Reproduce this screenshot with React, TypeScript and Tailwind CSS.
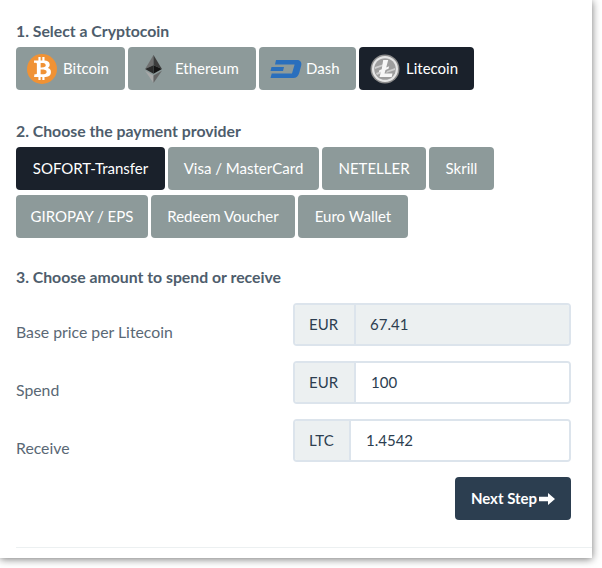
import { FaBtc } from "react-icons/fa";
import { ReactNode } from "react";

const lato = "font-['Lato','Liberation_Sans',sans-serif]";

function Coin({
  label,
  icon,
  active,
  className,
}: {
  label: string;
  icon?: ReactNode;
  active?: boolean;
  className: string;
}) {
  return (
    <button
      className={`flex h-[43px] items-center rounded-[4px] text-[15px] text-white ${
        active ? "bg-[#1a212b]" : "bg-[#8d9a9a]"
      } ${className}`}
    >
      {icon}
      <span>{label}</span>
    </button>
  );
}

function BitcoinIcon() {
  return (
    <span className="mr-[6px] flex h-[30px] w-[30px] items-center justify-center rounded-full bg-[#f09235]">
      <FaBtc className="h-[23px] w-[23px] text-white" />
    </span>
  );
}

function EthereumIcon() {
  return (
    <svg viewBox="0 0 20 30" className="mr-[12px] h-[28px] w-[19px]">
      <polygon points="10,0 10,11 1,15" fill="#6f6f6f" />
      <polygon points="10,0 10,11 19,15" fill="#3c3c3c" />
      <polygon points="10,11 1,15 10,20" fill="#2a2a2a" />
      <polygon points="10,11 19,15 10,20" fill="#141414" />
      <polygon points="1,17 10,30 10,22" fill="#a8a8a8" />
      <polygon points="19,17 10,30 10,22" fill="#666666" />
    </svg>
  );
}

function DashIcon() {
  return (
    <svg viewBox="0 0 32 18" className="mr-[4px] h-[18px] w-[32px]">
      <path
        d="M6 0h21c3.500 0 5 2.500 4.200 5.500l-2 7.500c-.8 3-3 5-6 5H.5l1.200-4.500H22l2.600-9H5z"
        fill="#2a6fbd"
      />
      <path d="M1.500 7H14l-1 4H.5z" fill="#2a6fbd" />
    </svg>
  );
}

function LitecoinIcon() {
  return (
    <svg viewBox="0 0 30 30" className="mr-[6px] h-[30px] w-[30px]">
      <circle cx="15" cy="15" r="14.500" fill="#8c8c8c" />
      <circle cx="15" cy="15" r="13" fill="#e6e6e6" />
      <circle cx="15" cy="15" r="10.800" fill="#9e9e9e" />
      <path d="M5 13l9-3-1 2-8 3zM17 17l8-3v2l-9 3zM6 19l6-2-.5 2-4.500 2z" fill="#cfcfcf" />
      <path
        d="M13.200 6h5l-2 7.500 3-1.200-.7 2.500-3 1.200-1 3.500h8l-.8 3.500H9.500l1.500-5.300-2.300.9.6-2.400 2.400-.9z"
        fill="#f7f7f7"
      />
    </svg>
  );
}

function PriceRow({
  label,
  unit,
  value,
  unitWidth,
  valuePad,
  readOnly,
}: {
  label: string;
  unit: string;
  value: string;
  unitWidth: string;
  valuePad: string;
  readOnly?: boolean;
}) {
  return (
    <div className="flex h-[43px]">
      <div className="w-[277px] pt-[18px] text-[15.8px] leading-[22px] text-[#5a6875]">{label}</div>
      <div className="flex w-[278px] overflow-hidden rounded-[4px] border-2 border-[#dce4ec] text-[15px] text-[#2c3e50]">
        <div className={`flex items-center border-r-2 border-[#dce4ec] bg-[#ecf0f1] pl-[14px] ${unitWidth}`}>{unit}</div>
        <div className={`flex flex-1 items-center ${valuePad} ${readOnly ? "bg-[#ecf0f1]" : "bg-white"}`}>{value}</div>
      </div>
    </div>
  );
}

export default function App() {
  return (
    <div className={`h-[568px] w-[602px] bg-white ${lato}`}>
      <div className="h-[558px] w-[592px] bg-white pl-4 pt-5 shadow-[0_1px_8px_rgba(0,0,0,0.55)]">
        <h2 className="mb-[5px] text-[15.8px] font-bold leading-[22px] text-[#4e5d6c]">1. Select a Cryptocoin</h2>
        <div className="flex gap-[3px]">
          <Coin label="Bitcoin" icon={<BitcoinIcon />} className="w-[109px] pl-[11px]" />
          <Coin label="Ethereum" icon={<EthereumIcon />} className="w-[128px] pl-4" />
          <Coin label="Dash" icon={<DashIcon />} className="w-[97px] pl-[11px]" />
          <Coin label="Litecoin" icon={<LitecoinIcon />} active className="w-[115px] pl-[11px]" />
        </div>

        <h2 className="mb-[5px] mt-[30px] text-[15.8px] font-bold leading-[22px] text-[#4e5d6c]">2. Choose the payment provider</h2>
        <div className="flex gap-[3px]">
          <Coin label="SOFORT-Transfer" active className="w-[149px] justify-center" />
          <Coin label="Visa / MasterCard" className="w-[151px] justify-center" />
          <Coin label="NETELLER" className="w-[104px] justify-center" />
          <Coin label="Skrill" className="w-[65px] justify-center" />
        </div>
        <div className="mt-[5px] flex gap-[3px]">
          <Coin label="GIROPAY / EPS" className="w-[132px] justify-center" />
          <Coin label="Redeem Voucher" className="w-[144px] justify-center" />
          <Coin label="Euro Wallet" className="w-[110px] justify-center" />
        </div>

        <h2 className="mb-[15px] mt-[28px] text-[15.8px] font-bold leading-[22px] text-[#4e5d6c]">3. Choose amount to spend or receive</h2>
        <div className="flex flex-col gap-[15px]">
          <PriceRow label="Base price per Litecoin" unit="EUR" value="67.41" unitWidth="w-[61px]" valuePad="pl-[14px]" readOnly />
          <PriceRow label="Spend" unit="EUR" value="100" unitWidth="w-[61px]" valuePad="pl-[15px]" />
          <PriceRow label="Receive" unit="LTC" value="1.4542" unitWidth="w-[56px]" valuePad="pl-[15px]" />
        </div>
        <div className="mt-[15px] flex w-[555px] justify-end">
          <button className="flex h-[43px] w-[116px] items-center justify-center rounded-[4px] bg-[#2c3e50] text-[15px] font-bold text-white">
            Next Step
            <svg viewBox="0 0 16 14" className="ml-[2px] h-[14px] w-[16px]" fill="currentColor">
              <path d="M9 1l7 6-7 6V9.200H0V4.800h9z" />
            </svg>
          </button>
        </div>
        <div className="mt-[27px] h-px bg-[#ecf0f1]" />
      </div>
    </div>
  );
}
